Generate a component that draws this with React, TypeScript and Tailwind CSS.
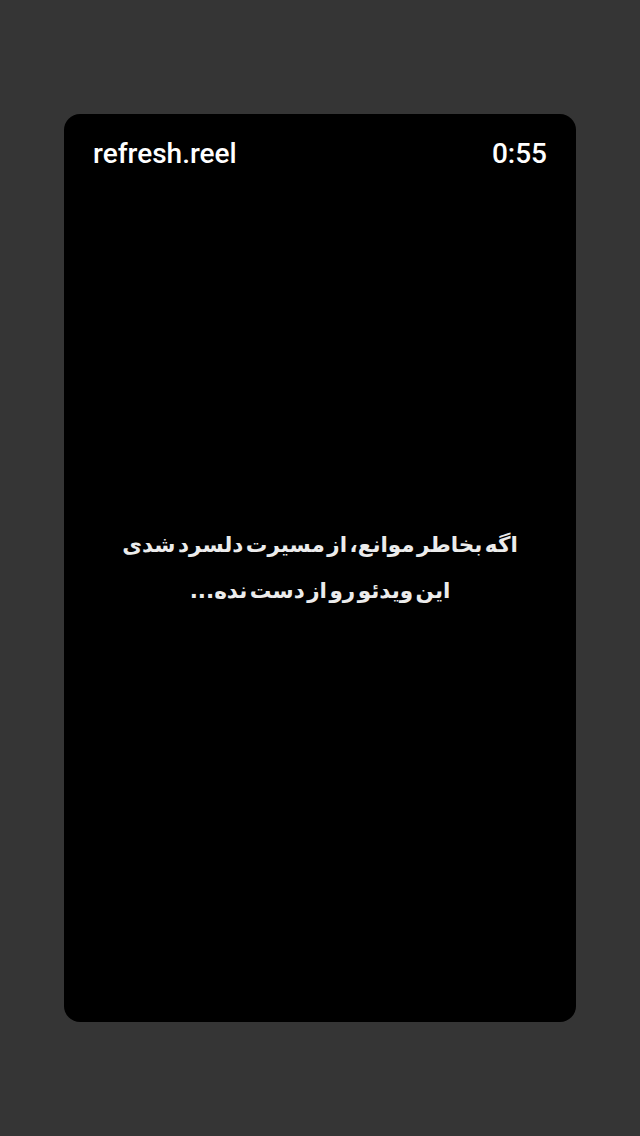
export default function App() {
  return (
    <div className="min-h-[1136px] w-full bg-[#353535] flex justify-center pt-[114px]">
      <div className="w-[512px] h-[908px] bg-black rounded-2xl flex flex-col">
        <div className="flex items-center justify-between px-[29px] pt-[23px] text-white text-[28px] leading-[34px] font-medium font-['Roboto',sans-serif]">
          <span>refresh.reel</span>
          <span>0:55</span>
        </div>
        <div className="flex-1 flex items-center justify-center pb-[58px]">
          <p
            dir="rtl"
            className="text-center text-[#ececec] font-bold text-[21.5px] leading-[46px] [word-spacing:-5px] font-['DejaVu_Sans',sans-serif]"
          >
            اگه بخاطر موانع، از مسیرت دلسرد شدی
            <br />
            این ویدئو رو از دست نده...
          </p>
        </div>
      </div>
    </div>
  );
}
